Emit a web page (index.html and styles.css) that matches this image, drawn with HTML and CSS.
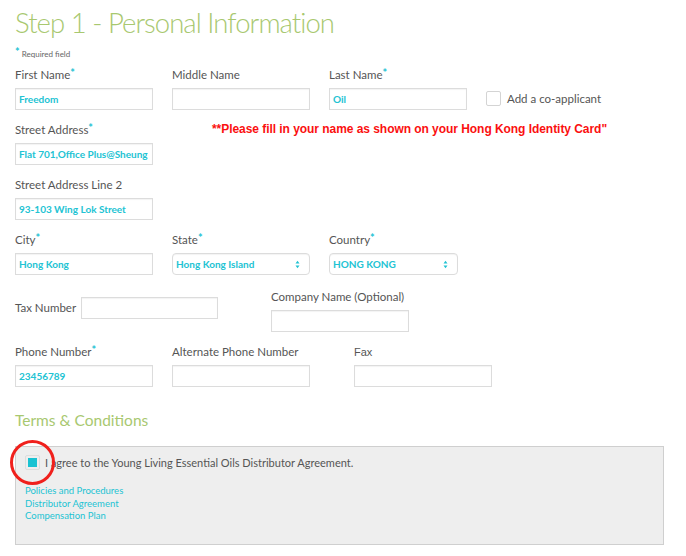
FILE: index.html
```html
<!DOCTYPE html>
<html lang="en">
<head>
  <meta charset="UTF-8" />
  <title>Step 1 - Personal Information</title>
  <link rel="stylesheet" href="styles.css">
</head>
<body>
  <div class="page">
    <h1 class="titulo">Step 1 - Personal Information</h1>
    <div class="obrigatorio"><span class="ast">*</span> Required field</div>

    <div class="linha">
      <div class="campo">
        <label>First Name<span class="ast">*</span></label>
        <div class="caixa">Freedom</div>
      </div>
      <div class="campo">
        <label>Middle Name</label>
        <div class="caixa"></div>
      </div>
      <div class="campo">
        <label>Last Name<span class="ast">*</span></label>
        <div class="caixa">Oil</div>
      </div>
      <div class="coapp">
        <span class="check"></span>
        <span>Add a co-applicant</span>
      </div>
    </div>

    <div class="linha">
      <div class="campo">
        <label>Street Address<span class="ast">*</span></label>
        <div class="caixa">Flat 701,Office Plus@Sheung</div>
      </div>
      <div class="aviso">**Please fill in your name as shown on your Hong Kong Identity Card"</div>
    </div>

    <div class="linha">
      <div class="campo">
        <label>Street Address Line 2</label>
        <div class="caixa">93-103 Wing Lok Street</div>
      </div>
    </div>

    <div class="linha">
      <div class="campo">
        <label>City<span class="ast">*</span></label>
        <div class="caixa">Hong Kong</div>
      </div>
      <div class="campo">
        <label>State<span class="ast">*</span></label>
        <div class="caixa selecao">Hong Kong Island
          <svg class="setas" width="5" height="9" viewBox="0 0 5 9"><path d="M0.5 3.5 L2.5 0.8 L4.5 3.5 Z M0.5 5.5 L2.5 8.2 L4.5 5.5 Z" fill="#22c3d3"/></svg>
        </div>
      </div>
      <div class="campo">
        <label>Country<span class="ast">*</span></label>
        <div class="caixa selecao pais">HONG KONG
          <svg class="setas" width="5" height="9" viewBox="0 0 5 9"><path d="M0.5 3.5 L2.5 0.8 L4.5 3.5 Z M0.5 5.5 L2.5 8.2 L4.5 5.5 Z" fill="#22c3d3"/></svg>
        </div>
      </div>
    </div>

    <div class="linha linha-imposto">
      <div class="imposto">
        <label>Tax Number</label>
        <div class="caixa"></div>
      </div>
      <div class="campo empresa">
        <label>Company Name (Optional)</label>
        <div class="caixa"></div>
      </div>
    </div>

    <div class="linha">
      <div class="campo">
        <label>Phone Number<span class="ast">*</span></label>
        <div class="caixa">23456789</div>
      </div>
      <div class="campo">
        <label>Alternate Phone Number</label>
        <div class="caixa"></div>
      </div>
      <div class="campo fax">
        <label>Fax</label>
        <div class="caixa"></div>
      </div>
    </div>

    <h3 class="termos">Terms &amp; Conditions</h3>

    <div class="acordo">
      <div class="concordo">
        <span class="check marcado"></span>
        <span>I agree to the Young Living Essential Oils Distributor Agreement.</span>
      </div>
      <div class="links">
        <a href="#">Policies and Procedures</a>
        <a href="#">Distributor Agreement</a>
        <a href="#">Compensation Plan</a>
      </div>
      <span class="circulo"></span>
    </div>
  </div>
</body>
</html>
```

FILE: styles.css
```css
* {
  box-sizing: border-box;
  margin: 0;
  padding: 0;
}

body {
  font-family: 'Lato', sans-serif;
  background-color: #ffffff;
  color: #555;
}

.page {
  width: 686px;
  padding: 8px 15px 0 15px;
}

.titulo {
  font-weight: 300;
  font-size: 27.5px;
  line-height: 30px;
  color: #a8c870;
  letter-spacing: -0.95px;
}

.ast {
  color: #1fc3d4;
  font-weight: 700;
  font-size: 11px;
  vertical-align: top;
  line-height: 9px;
}

.obrigatorio {
  margin-top: 11px;
  font-size: 8px;
  line-height: 10px;
  color: #666;
}

.obrigatorio .ast {
  line-height: 6px;
}

.linha {
  display: flex;
  gap: 19px;
  margin-top: 9px;
}

.linha + .linha {
  margin-top: 13px;
}

.campo {
  display: flex;
  flex-direction: column;
  gap: 6px;
  width: 138px;
}

label {
  font-size: 11.5px;
  line-height: 14px;
  height: 14px;
  color: #555;
  white-space: nowrap;
}

.caixa {
  height: 22px;
  border: 1px solid #dcdcdc;
  box-shadow: inset 0 1px 1px rgba(0, 0, 0, 0.05);
  padding: 0 3px;
  font-size: 10px;
  font-weight: 700;
  line-height: 20px;
  color: #22c3d3;
  white-space: nowrap;
  overflow: hidden;
  background-color: #fff;
}

.selecao {
  border-radius: 4px;
  position: relative;
}

.selecao .setas {
  position: absolute;
  right: 9px;
  top: 6px;
}

.pais {
  width: 129px;
}

.coapp {
  display: flex;
  align-items: center;
  gap: 6px;
  margin-top: 23px;
  height: 14px;
  font-size: 11.5px;
  color: #555;
}

.check {
  display: inline-block;
  width: 15px;
  height: 15px;
  border: 1px solid #d4d4d4;
  border-radius: 2px;
  background-color: #fff;
}

.aviso {
  margin-left: 40px;
  margin-top: -1px;
  font-family: 'Liberation Sans', sans-serif;
  font-weight: 700;
  font-size: 12px;
  letter-spacing: -0.05px;
  color: #fb1010;
  white-space: nowrap;
}

.linha-imposto {
  gap: 53px;
}

.linha + .linha-imposto {
  margin-top: 15px;
}

.imposto {
  display: flex;
  align-items: center;
  gap: 6px;
  margin-top: 7px;
  height: 22px;
}

.imposto label {
  width: 60px;
}

.imposto .caixa {
  width: 137px;
}

.fax {
  margin-left: 25px;
}

.fax label {
  font-family: 'Liberation Sans', sans-serif;
  font-size: 11px;
}

.termos {
  margin-top: 25px;
  font-weight: 400;
  font-size: 15.5px;
  line-height: 16px;
  color: #a8c870;
}

.acordo {
  position: relative;
  margin-top: 18px;
  width: 649px;
  height: 99px;
  background-color: #eeeeee;
  border: 1px solid #cfcfcf;
  padding: 8px 9px;
}

.concordo {
  display: flex;
  align-items: center;
  gap: 5px;
  font-size: 11px;
  color: #555;
}

.check.marcado {
  border-color: #ddd;
  padding: 2px;
  background-clip: content-box;
  background-color: #19c2d2;
}

.links {
  display: flex;
  flex-direction: column;
  margin-top: 15px;
}

.links a {
  font-size: 9.5px;
  line-height: 12.5px;
  color: #22c3d3;
  text-decoration: none;
}

.circulo {
  position: absolute;
  left: -6px;
  top: -7px;
  width: 45px;
  height: 45px;
  border: 3px solid #f0201c;
  border-radius: 50%;
}
```
